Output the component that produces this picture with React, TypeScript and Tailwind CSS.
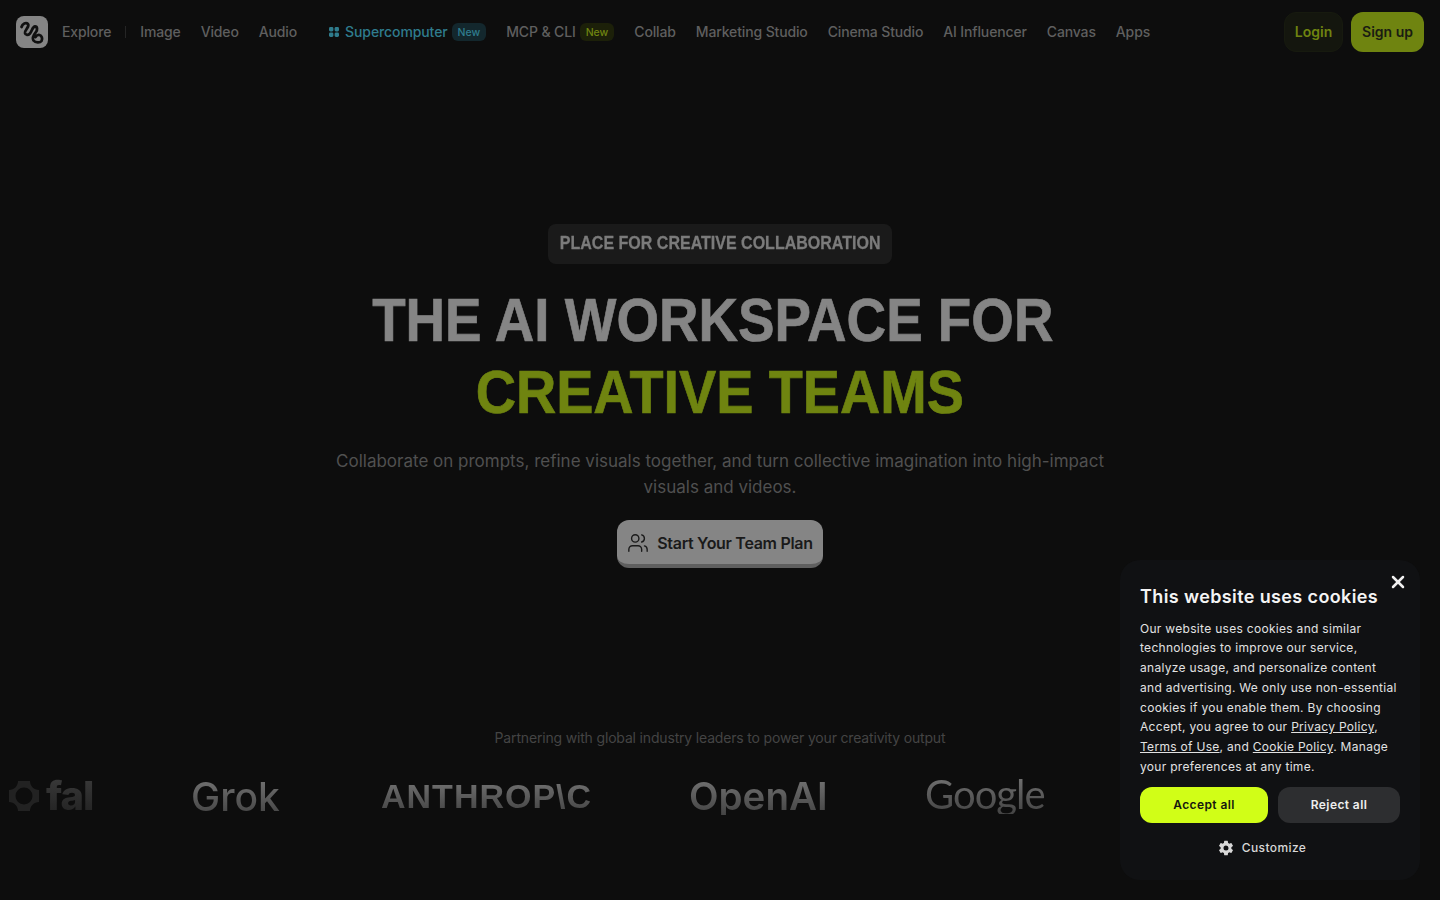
import { Users, X } from 'lucide-react';
import { IoSettingsSharp } from 'react-icons/io5';

const inter = { fontFamily: 'Inter, sans-serif' };
const liberation = { fontFamily: '"Liberation Sans", sans-serif' };

function NavLink({ label }: { label: string }) {
  return <a className="text-[14px] leading-5 font-medium tracking-[-0.14px] text-[#5f5f5f] whitespace-nowrap">{label}</a>;
}

function Divider() {
  return <span className="w-px h-3 bg-[#252525]" />;
}

function Logo() {
  return (
    <div className="w-8 h-8 rounded-lg bg-[#858585] flex items-center justify-center">
      <svg viewBox="0 0 32 32" className="w-8 h-8" fill="none" stroke="#111" strokeWidth="2.8" strokeLinecap="round" strokeLinejoin="round">
        <path d="M5.5 11 C6.5 7.5 10 6 12 8 C14 10.5 8.5 14 9 17 C9.5 19.5 12 19.5 14 17.5 C16 15 16.5 10.5 19 10.5 C21.5 10.5 21.5 14 20 16 C18 18.5 15.5 21.5 17.5 24.5 C19.5 27 24 27 25.5 25 C27 22.5 25.5 19.5 23.5 19 C22 18.7 20.5 19.5 19.5 21" />
      </svg>
    </div>
  );
}

function Navbar() {
  return (
    <header className="h-16 flex items-center justify-between pl-4 pr-4 shrink-0">
      <nav className="flex items-center">
        <Logo />
        <div className="ml-3.5 flex items-center gap-3.5">
          <NavLink label="Explore" />
          <Divider />
        </div>
        <div className="ml-3.5 flex items-center gap-5">
          <NavLink label="Image" />
          <NavLink label="Video" />
          <NavLink label="Audio" />
        </div>
        <div className="ml-3.5">
          <Divider />
        </div>
        <div className="ml-[17px] flex items-center gap-[5px]">
          <svg viewBox="0 0 12 12" className="w-3 h-3" fill="#2f7c8d">
            <rect x="1" y="1" width="4.4" height="4.4" rx="1.4" />
            <rect x="6.6" y="1" width="4.4" height="4.4" rx="1.4" />
            <rect x="1" y="6.6" width="4.4" height="4.4" rx="1.4" />
            <rect x="6.6" y="6.6" width="4.4" height="4.4" rx="1.4" />
          </svg>
          <a className="text-[14px] leading-5 font-medium tracking-[-0.1px] text-[#2f7c8d]">Supercomputer</a>
          <span className="ml-[-1px] h-[18px] px-[6px] rounded-md bg-[#13272d] text-[10.5px] leading-[19px] font-medium text-[#2f7c8d]">New</span>
        </div>
        <div className="ml-5 flex items-center gap-1">
          <NavLink label="MCP & CLI" />
          <span className="h-[18px] px-[6px] rounded-md bg-[#1c2009] text-[10.5px] leading-[19px] font-medium text-[#6f8410]">New</span>
        </div>
        <div className="ml-5 flex items-center gap-5">
          <NavLink label="Collab" />
          <NavLink label="Marketing Studio" />
          <NavLink label="Cinema Studio" />
          <NavLink label="AI Influencer" />
          <NavLink label="Canvas" />
          <NavLink label="Apps" />
        </div>
      </nav>
      <div className="flex items-center gap-2">
        <button className="h-10 w-[59px] pb-px rounded-xl bg-[#14160e] border border-[#171a0f] text-[14px] font-semibold text-[#6f8410]">Login</button>
        <button className="h-10 w-[73px] pb-px rounded-xl bg-[#6f8410] text-[14px] font-semibold text-[#1a1c12]">Sign up</button>
      </div>
    </header>
  );
}

function Hero() {
  return (
    <section className="flex flex-col items-center pt-[160px]">
      <div className="h-10 w-[344px] pb-px rounded-lg bg-[#1a1a1a] flex items-center justify-center text-[#7b7b7b]" style={liberation}>
        <span className="block scale-x-[.89] text-[18px] font-bold whitespace-nowrap [-webkit-text-stroke:0.3px_#7b7b7b]">PLACE FOR CREATIVE COLLABORATION</span>
      </div>
      <h1 className="mt-5 text-center text-[62px] leading-[72px] font-bold whitespace-nowrap" style={liberation}>
        <span className="block -translate-x-[7px] scale-x-[.883] text-[#858585] [-webkit-text-stroke:0.7px_#858585]">THE AI WORKSPACE FOR</span>
        <span className="block scale-x-[.899] text-[#6f8410] [-webkit-text-stroke:0.7px_#6f8410]">CREATIVE TEAMS</span>
      </h1>
      <p className="mt-5 w-[800px] text-center text-[17px] leading-[26px] text-[#505050]">
        Collaborate on prompts, refine visuals together, and turn collective imagination into high-impact visuals and videos.
      </p>
      <button className="mt-5 h-12 w-[206px] pt-px rounded-xl bg-[#858585] border-b-4 border-[#5f5f5f] flex items-center justify-center gap-2 text-[16px] font-semibold tracking-[-0.3px] text-[#1a1a1a]">
        <Users size={22} strokeWidth={1.5} />
        Start Your Team Plan
      </button>
    </section>
  );
}

function Partners() {
  return (
    <section className="mt-[160px] flex flex-col">
      <p className="text-center text-[14px] leading-5 tracking-[-0.17px] text-[#444444]">Partnering with global industry leaders to power your creativity output</p>
      <div className="mt-5 h-14 flex items-center pl-2">
        <div className="flex items-center gap-1.5 w-[183px]">
          <svg viewBox="0 0 32 32" className="w-8 h-8" fill="#222">
            <path fillRule="evenodd" d="M10 1h12c0 5 4 9 9 9v12c-5 0-9 4-9 9H10c0-5-4-9-9-9V10c5 0 9-4 9-9zM16 7.5a8.5 8.5 0 100 17 8.5 8.5 0 000-17z" />
          </svg>
          <span className="text-[40px] leading-none font-extrabold tracking-[-1px] bg-gradient-to-b from-[#3a3a3a] to-[#222] bg-clip-text text-transparent">fal</span>
        </div>
        <span className="w-[190px] text-[39px] leading-none font-medium bg-gradient-to-b from-[#747474] to-[#444] bg-clip-text text-transparent">Grok</span>
        <span className="w-[308px] text-[34px] leading-none font-bold tracking-[1px] bg-gradient-to-b from-[#747474] to-[#444] bg-clip-text text-transparent" style={liberation}>ANTHROP\C</span>
        <span className="w-[236px] text-[38.5px] leading-none font-semibold bg-gradient-to-b from-[#747474] to-[#444] bg-clip-text text-transparent">OpenAI</span>
        <span className="-mt-1 text-[40px] leading-none font-normal tracking-[-1px] bg-gradient-to-b from-[#747474] to-[#444] bg-clip-text text-transparent" style={{ fontFamily: 'Lato, sans-serif' }}>Google</span>
      </div>
    </section>
  );
}

function CookieBanner() {
  return (
    <aside className="absolute right-5 bottom-5 w-[300px] h-[320px] rounded-[20px] bg-[#101113] px-5 pt-[23px] text-white">
      <button className="absolute top-3 right-3 text-[#f0f0f0]">
        <X size={20} strokeWidth={3} />
      </button>
      <h2 className="text-[18px] leading-[28px] font-semibold tracking-[0.38px] text-[#f4f4f4]">This website uses cookies</h2>
      <p className="mt-[7.5px] text-[12px] leading-[19.8px] tracking-[0.3px] text-[#e2e2e2]">
        Our website uses cookies and similar technologies to improve our service, analyze usage, and personalize content and advertising. We only use non-essential cookies if you enable them. By choosing Accept, you agree to our <a className="underline">Privacy Policy</a>, <a className="underline">Terms of Use</a>, and <a className="underline">Cookie Policy</a>. Manage your preferences at any time.
      </p>
      <div className="mt-[10.5px] flex gap-2.5">
        <button className="h-9 w-[128px] rounded-xl bg-[#d1fe17] text-[12px] font-semibold tracking-[0.4px] text-[#16170f]">Accept all</button>
        <button className="h-9 w-[122px] rounded-xl bg-[#2d2e30] text-[12px] font-semibold tracking-[0.4px] text-[#eeeeee]">Reject all</button>
      </div>
      <button className="mt-4 w-full pr-4 flex items-center justify-center gap-2 text-[12px] font-medium tracking-[0.4px] text-[#d8d8d8]">
        <IoSettingsSharp size={16} />
        Customize
      </button>
    </aside>
  );
}

export default function App() {
  return (
    <div className="relative h-[900px] w-[1440px] overflow-hidden bg-[#0d0d0d] flex flex-col" style={inter}>
      <Navbar />
      <Hero />
      <Partners />
      <CookieBanner />
    </div>
  );
}
